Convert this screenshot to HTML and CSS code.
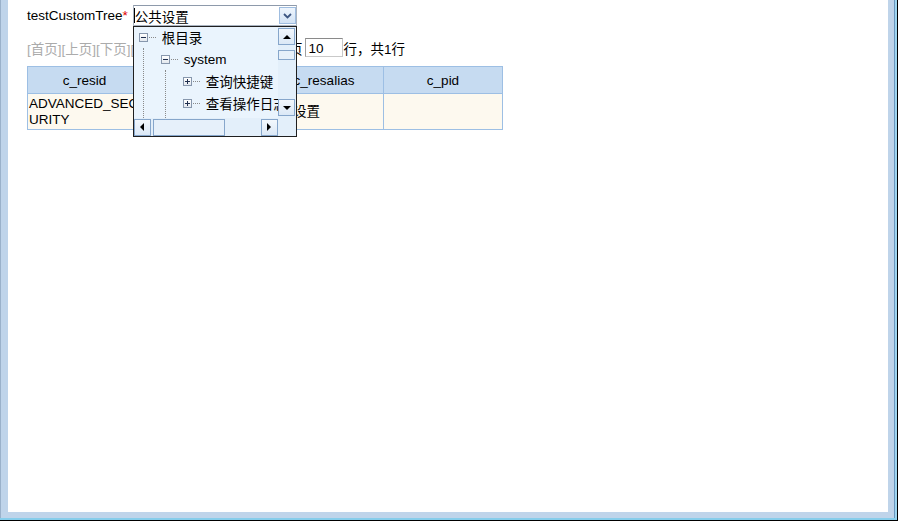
FILE: index.html
```html
<!DOCTYPE html>
<html lang="zh-CN">
<head>
  <meta charset="UTF-8" />
  <title>testCustomTree</title>
  <link rel="stylesheet" href="styles.css">
</head>
<body>
  <div class="window">
    <div class="frame">
      <div class="sash">
        <div class="client">
          <div class="field">
            <label>testCustomTree<span class="req">*</span></label>
            <div class="combo">
              <span class="caret"></span>
              <span class="combo-text">公共设置</span>
              <span class="combo-btn">
                <svg width="9" height="6" viewBox="0 0 9 6"><polyline points="1,1 4.5,4.5 8,1" fill="none" stroke="#3d5682" stroke-width="1.8"/></svg>
              </span>

              <!-- 下拉树 -->
              <div class="dropdown">
                <div class="tree">
                  <ul>
                    <li>
                      <div class="node-row"><span class="toggle"></span><span class="branch"></span>根目录</div>
                      <ul class="children">
                        <li>
                          <div class="node-row"><span class="toggle"></span><span class="branch"></span>system</div>
                          <ul class="children">
                            <li><div class="node-row"><span class="toggle plus"></span><span class="branch"></span>查询快捷键</div></li>
                            <li><div class="node-row"><span class="toggle plus"></span><span class="branch"></span>查看操作日志</div></li>
                            <li><div class="node-row"><span class="toggle plus"></span><span class="branch"></span>公共设置</div></li>
                          </ul>
                        </li>
                      </ul>
                    </li>
                  </ul>
                </div>
                <div class="vscroll">
                  <span class="sbtn"><span class="arr up"></span></span>
                  <span class="vthumb"></span>
                  <span class="sbtn down-btn"><span class="arr down"></span></span>
                </div>
                <div class="hscroll">
                  <span class="sbtn"><span class="arr left"></span></span>
                  <span class="hthumb"></span>
                  <span class="sbtn right-btn"><span class="arr right"></span></span>
                </div>
                <div class="corner"></div>
              </div>
            </div>
          </div>

          <div class="pager">
            <span class="links">[首页][上页][下页][尾页]</span>
            <span class="info">第1页/共1页 每页</span>
            <input class="size" type="text" value="10">
            <span class="info">行，共1行</span>
          </div>

          <table class="grid">
            <colgroup>
              <col style="width:114px"><col style="width:123px"><col style="width:119px"><col style="width:119px">
            </colgroup>
            <tr>
              <th>c_resid</th>
              <th>c_resname</th>
              <th>c_resalias</th>
              <th>c_pid</th>
            </tr>
            <tr>
              <td>ADVANCED_SECURITY</td>
              <td>公共设置</td>
              <td>公共设置</td>
              <td></td>
            </tr>
          </table>
        </div>
      </div>
    </div>
  </div>
</body>
</html>
```

FILE: styles.css
```css
* {
  box-sizing: border-box;
}
body {
  margin: 0;
  background: #fff;
  font-family: "Liberation Sans", "Noto Sans CJK SC", sans-serif;
  font-size: 13.5px;
  color: #000;
}
/* 窗口边框 */
.window {
  width: 898px;
  height: 521px;
  border-right: 1px solid #000;
  border-bottom: 1px solid #000;
}
.frame {
  height: 100%;
  border-right: 2px solid #9ed5f0;
  border-bottom: 2px solid #86cdeb;
}
.sash {
  height: 100%;
  background: #bfd4ea;
  border-left: 1px solid #9ab1ca;
  border-right: 1px solid #6a97be;
  padding: 0 6px 6px 7px;
}
.client {
  height: 100%;
  background: #fff;
  padding: 5px 0 0 19px;
}
.field {
  display: flex;
  align-items: center;
  height: 21px;
}
.field label {
  margin-right: 5px;
}
.req {
  color: #e00000;
}
.combo {
  position: relative;
  width: 164px;
  height: 21px;
  border: 1px solid #a9b3c0;
  border-top-color: #8e9aab;
  background: #fff;
  display: flex;
  align-items: center;
}
.caret {
  width: 1px;
  height: 15px;
  background: #000;
}
.combo-btn {
  margin-left: auto;
  width: 17px;
  height: 17px;
  border: 1px solid #9fbde0;
  background: linear-gradient(#eef5fd, #d3e3f5);
  display: flex;
  align-items: center;
  justify-content: center;
}
.dropdown {
  position: absolute;
  left: -1px;
  top: 20px;
  width: 164px;
  height: 111px;
  border: 1px solid #1f1f1f;
  background: #eaf4fd;
  display: grid;
  grid-template-columns: 144px 18px;
  grid-template-rows: 91px 18px;
  z-index: 2;
}
.tree {
  overflow: hidden;
  padding-left: 5px;
  margin-top: -1px;
}
.tree ul {
  list-style: none;
  margin: 0;
  padding: 0;
}
.node-row {
  display: flex;
  align-items: center;
  height: 22px;
  white-space: nowrap;
}
.toggle {
  position: relative;
  flex: none;
  width: 9px;
  height: 9px;
  border: 1px solid #8797ad;
  background: linear-gradient(#fff, #e3e8ee);
}
.toggle::before {
  content: "";
  position: absolute;
  left: 1px;
  top: 3px;
  width: 5px;
  height: 1px;
  background: #1f2f4f;
}
.toggle.plus::after {
  content: "";
  position: absolute;
  left: 3px;
  top: 1px;
  width: 1px;
  height: 5px;
  background: #1f2f4f;
}
.branch {
  flex: none;
  width: 7px;
  border-top: 1px dotted #8a8a8a;
  margin: 0 6px 0 1px;
}
.tree .children {
  margin-left: 4px;
  border-left: 1px dotted #8a8a8a;
  padding-left: 17px;
}
/* 滚动条 */
.vscroll {
  display: flex;
  flex-direction: column;
  align-items: center;
  padding-top: 1px;
  background: #e3effa;
}
.sbtn {
  width: 17px;
  height: 17px;
  border: 1px solid #86a6cb;
  background: linear-gradient(#f3f8fd, #dbe8f6);
  display: flex;
  align-items: center;
  justify-content: center;
  flex: none;
}
.vthumb {
  width: 17px;
  height: 10px;
  margin-top: 5px;
  border: 1px solid #86a6cb;
  background: #e6f0fa;
}
.down-btn {
  margin-top: auto;
  margin-bottom: 2px;
}
.hscroll {
  display: flex;
  align-items: center;
  background: #e3effa;
}
.hthumb {
  width: 72px;
  height: 17px;
  margin-left: 2px;
  border: 1px solid #86a6cb;
  background: #e6f0fa;
}
.right-btn {
  margin-left: auto;
}
.corner {
  background: #e3effa;
}
.arr {
  width: 0;
  height: 0;
  border: 4px solid transparent;
}
.arr.up {
  border-bottom-color: #000;
  border-top-width: 0;
}
.arr.down {
  border-top-color: #000;
  border-bottom-width: 0;
}
.arr.left {
  border-right-color: #000;
  border-left-width: 0;
}
.arr.right {
  border-left-color: #000;
  border-right-width: 0;
}
/* 分页 */
.pager {
  display: flex;
  align-items: center;
  margin-top: 12px;
  height: 19px;
}
.pager .links {
  color: #ababab;
}
.pager .info {
  white-space: nowrap;
}
.pager .links + .info {
  margin-left: 34px;
}
.size {
  width: 38px;
  height: 19px;
  margin: 0 1px 0 2px;
  padding: 2px 0 0 3px;
  border: 1px solid #c9c9c9;
  border-top-color: #8a8a8a;
  border-left-color: #9e9e9e;
  font: inherit;
}
/* 表格 */
.grid {
  margin-top: 9px;
  border-collapse: collapse;
  table-layout: fixed;
  width: 475px;
}
.grid th {
  height: 27px;
  background: #c6dbf1;
  border: 1px solid #9dbfe4;
  font-weight: normal;
  text-align: center;
  padding: 0;
}
.grid td {
  height: 36px;
  background: #fdf9ef;
  border: 1px solid #9dbfe4;
  padding: 0 1px;
  line-height: 16px;
  word-break: break-all;
  vertical-align: middle;
}
```
